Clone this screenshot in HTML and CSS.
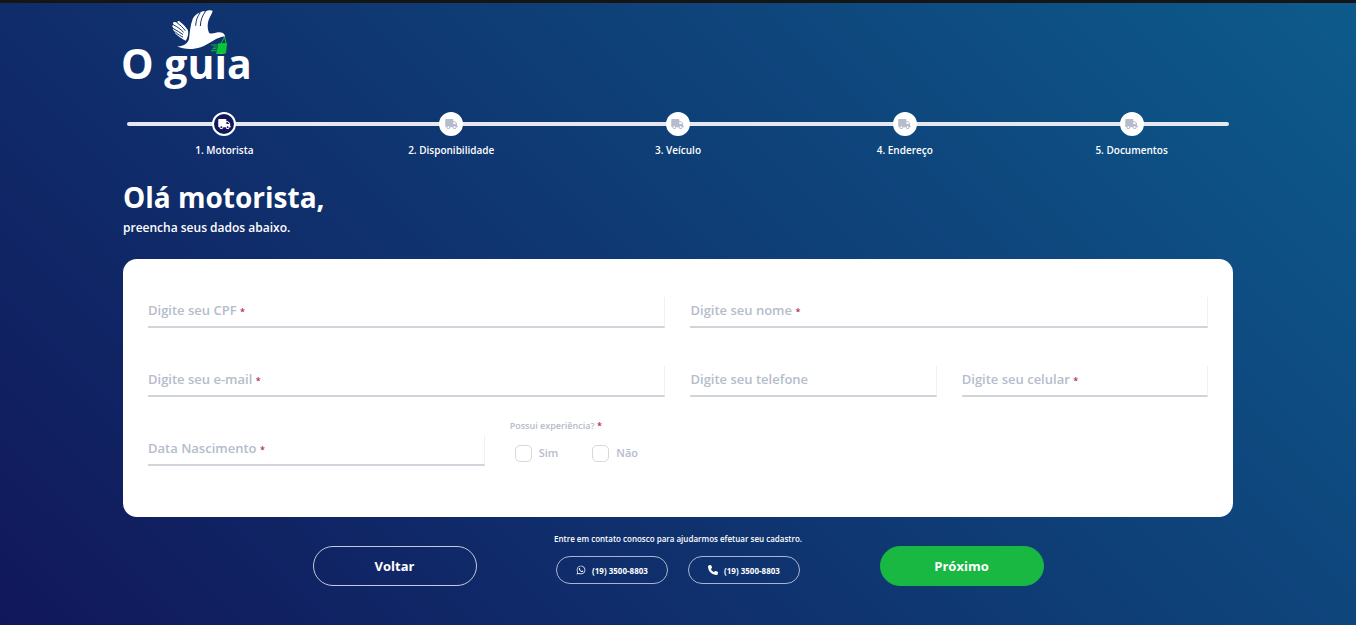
FILE: index.html
```html
<!DOCTYPE html>
<html lang="pt-BR">
<head>
    <meta charset="UTF-8">
    <meta name="viewport" content="width=device-width, initial-scale=1.0">
    <title>O guia - Cadastro de motorista</title>
    <link rel="stylesheet" href="styles.css">
</head>
<body>
    <svg class="sprite" aria-hidden="true">
        <symbol id="truck" viewBox="0 0 640 512">
            <path d="M624 352h-16V243.900c0-12.700-5.100-24.900-14.100-33.900L494 110.100c-9-9-21.200-14.100-33.900-14.100H416V48c0-26.500-21.500-48-48-48H48C21.500 0 0 21.500 0 48v320c0 26.500 21.500 48 48 48h16c0 53 43 96 96 96s96-43 96-96h128c0 53 43 96 96 96s96-43 96-96h48c8.800 0 16-7.200 16-16v-32c0-8.800-7.200-16-16-16zM160 464c-26.500 0-48-21.500-48-48s21.500-48 48-48 48 21.500 48 48-21.500 48-48 48zm320 0c-26.500 0-48-21.500-48-48s21.500-48 48-48 48 21.500 48 48-21.500 48-48 48zm80-208H416V144h44.100l99.900 99.900V256z"/>
        </symbol>
    </svg>

    <div class="container">
        <header>
            <a href="#" class="logo" aria-label="O guia">
                <svg width="140" height="100" viewBox="0 0 140 100">
                    <text class="logo-text" x="-2" y="73">O guia</text>
                    <g transform="translate(37 -1) scale(.3333)">
                        <!-- pomba -->
                        <path fill="#fff" d="M52 124C68 125 82 117 87 103C89 85 91 60 98 42C102 32 112 25 118 24C125 19 131 18 135 20C140 16 155 13 158 19C155 30 147 38 144 52C142 64 143 74 147 83C153 88 160 84 168 83C184 80 193 84 196 95C188 93 183 96 176 99C158 105 144 119 122 127C98 135 70 134 52 124Z"/>
                        <path fill="#fff" d="M84 76C77 65 68 56 58 49C53 46 50 50 55 55L47 52C40 48 36 54 42 60C35 59 36 66 42 71C38 71 39 77 46 81C43 83 47 88 54 92C61 98 70 103 77 107C83 99 86 88 84 76Z"/>
                        <path fill="none" stroke="#12306b" stroke-width="3" stroke-linecap="round" d="M107 61C108 44 113 33 120 24M121 62C122 44 128 30 136 20M75 76C69 68 61 60 53 55M70 81C62 73 53 66 41 60M68 88C60 82 51 77 42 72M68 96C62 93 54 88 47 82"/>
                        <!-- entrega -->
                        <path fill="none" stroke="#08c436" stroke-width="3" d="M194 96L183 116M194 96L198 116M154 120H174M160 126H172M157 131H170M153 137H170"/>
                        <path fill="#08c436" d="M175 115L201 114Q202 115 201 118L198 143Q197 146 193 146L168 147C171 138 173 128 175 115Z"/>
                    </g>
                </svg>
            </a>
        </header>

        <ol class="steps">
            <li class="step active"><span class="step-icon"><svg><use href="#truck"/></svg></span>1. Motorista</li>
            <li class="step"><span class="step-icon"><svg><use href="#truck"/></svg></span>2. Disponibilidade</li>
            <li class="step"><span class="step-icon"><svg><use href="#truck"/></svg></span>3. Veículo</li>
            <li class="step"><span class="step-icon"><svg><use href="#truck"/></svg></span>4. Endereço</li>
            <li class="step"><span class="step-icon"><svg><use href="#truck"/></svg></span>5. Documentos</li>
        </ol>

        <h1>Olá motorista,</h1>
        <p class="subtitle">preencha seus dados abaixo.</p>

        <form>
            <div class="card">
                <div class="field half">
                    <input type="text" id="cpf" required>
                    <label for="cpf">Digite seu CPF <span class="required">*</span></label>
                </div>
                <div class="field half">
                    <input type="text" id="nome" required>
                    <label for="nome">Digite seu nome <span class="required">*</span></label>
                </div>
                <div class="field half">
                    <input type="email" id="email" required>
                    <label for="email">Digite seu e-mail <span class="required">*</span></label>
                </div>
                <div class="field quarter">
                    <input type="tel" id="telefone">
                    <label for="telefone">Digite seu telefone</label>
                </div>
                <div class="field quarter">
                    <input type="tel" id="celular" required>
                    <label for="celular">Digite seu celular <span class="required">*</span></label>
                </div>
                <div class="field third">
                    <input type="text" id="nascimento" required>
                    <label for="nascimento">Data Nascimento <span class="required">*</span></label>
                </div>
                <fieldset class="third">
                    <legend>Possui experiência? <span class="required">*</span></legend>
                    <div class="options">
                        <label><input type="radio" name="experiencia" value="sim">Sim</label>
                        <label><input type="radio" name="experiencia" value="nao">Não</label>
                    </div>
                </fieldset>
            </div>

            <div class="actions">
                <button type="button" class="btn">Voltar</button>
                <div class="contact">
                    <p>Entre em contato conosco para ajudarmos efetuar seu cadastro.</p>
                    <div class="phones">
                        <a href="https://wa.me/551935008803">
                            <svg viewBox="0 0 448 512"><path d="M380.900 97.100C339 55.100 283.200 32 223.900 32c-122.400 0-222 99.600-222 222 0 39.100 10.200 77.300 29.600 111L0 480l117.700-30.900c32.400 17.700 68.900 27 106.100 27h.1c122.300 0 224.100-99.600 224.100-222 0-59.300-25.200-115-67.100-157zm-157 341.600c-33.200 0-65.700-8.900-94-25.700l-6.700-4-69.800 18.300L72 359.200l-4.400-7c-18.500-29.400-28.200-63.300-28.200-98.200 0-101.700 82.800-184.500 184.600-184.500 49.300 0 95.600 19.200 130.400 54.100 34.800 34.900 56.200 81.200 56.100 130.500 0 101.800-84.900 184.600-186.600 184.600zm101.200-138.200c-5.500-2.800-32.800-16.200-37.900-18-5.100-1.900-8.800-2.800-12.500 2.800-3.700 5.600-14.300 18-17.600 21.800-3.200 3.700-6.500 4.200-12 1.400-32.600-16.300-54-29.100-75.500-66-5.700-9.800 5.700-9.100 16.300-30.300 1.800-3.700.9-6.900-.5-9.700-1.400-2.800-12.500-30.100-17.100-41.200-4.500-10.800-9.100-9.300-12.500-9.500-3.200-.2-6.900-.2-10.600-.2-3.700 0-9.700 1.400-14.800 6.900-5.100 5.600-19.400 19-19.400 46.300 0 27.300 19.900 53.700 22.600 57.400 2.800 3.700 39.100 59.700 94.800 83.800 35.200 15.200 49 16.500 66.600 13.900 10.700-1.600 32.800-13.400 37.400-26.400 4.600-13 4.600-24.100 3.200-26.400-1.300-2.500-5-3.900-10.500-6.600z"/></svg>
                            (19) 3500-8803
                        </a>
                        <a href="tel:+551935008803">
                            <svg viewBox="0 0 512 512"><path d="M164.900 24.600c-7.700-18.600-28-28.500-47.400-23.200l-88 24C12.100 30.200 0 46 0 64C0 311.400 200.600 512 448 512c18 0 33.800-12.100 38.600-29.500l24-88c5.300-19.400-4.600-39.700-23.200-47.400l-96-40c-16.300-6.800-35.200-2.100-46.300 11.600L304.700 368C234.300 334.700 177.300 277.700 144 207.300L193.300 167c13.700-11.200 18.400-30 11.600-46.300l-40-96z"/></svg>
                            (19) 3500-8803
                        </a>
                    </div>
                </div>
                <button type="submit" class="btn btn-next">Próximo</button>
            </div>
        </form>
    </div>
</body>
</html>
```

FILE: styles.css
```css
* { box-sizing: border-box; }
body {
    margin: 0; min-height: 100vh;
    font-family: "Open Sans", "Noto Sans", sans-serif;
    color: #fff;
    border-top: 3px solid #151515;
    background: linear-gradient(45deg, #11175b 0%, #0d5b8b 100%);
}
.sprite { display: none; }
.container { max-width: 1134px; margin: 0 auto; padding: 0 12px 36px; }
.logo { display: block; width: 140px; height: 86px; margin-top: 3px; }
.logo svg { display: block; overflow: visible; }
.logo-text { font-size: 41px; font-weight: 700; fill: #fff; }

/* etapas */
.steps {
    display: flex; position: relative;
    list-style: none; padding: 0; margin: 20px -12px 0;
}
.steps::before {
    content: ""; position: absolute; top: 10px; left: 16px; right: 16px;
    height: 4px; border-radius: 2px; background: #e6e8ee;
}
.step {
    flex: 1; position: relative;
    display: flex; flex-direction: column; align-items: center; gap: 6px;
    font-size: 10px; line-height: 16px; font-weight: 600;
}
.step-icon {
    width: 24px; height: 24px; border-radius: 50%;
    border: 2px solid #fff; background: #fff; color: #b5bccb;
    display: flex; align-items: center; justify-content: center;
}
.step-icon svg { width: 13px; height: 10px; fill: currentColor; }
.step.active .step-icon { background: #11175b; color: #fff; }

h1 { margin: 20px 0 0; font-size: 28px; line-height: 38px; font-weight: 700; }
.subtitle { margin: 2px 0 21px; font-size: 12px; line-height: 20px; font-weight: 600; }

/* formulário */
.card {
    display: grid; grid-template-columns: repeat(12, 1fr);
    grid-auto-rows: minmax(69px, auto); column-gap: 25px; align-items: end;
    background: #fff; border-radius: 14px; padding: 0 25px 51px;
}
.half { grid-column: span 6; }
.third { grid-column: span 4; }
.quarter { grid-column: span 3; }
.field { display: grid; }
.field input, .field label { grid-area: 1 / 1; }
.field input {
    width: 100%; height: 31px; padding: 0; font: inherit; font-size: 13px; color: #333;
    background: none; border: 0; border-right: 1px solid #f0f1f3;
    border-bottom: 2px solid #d0d4db; outline: none;
}
.field label {
    pointer-events: none; color: #b5bccb;
    font-size: 13px; line-height: 26px; font-weight: 600;
}
.field input:focus { border-bottom-color: #11175b; }
.field input:focus + label, .field input:valid:required + label { visibility: hidden; }
.required { color: #b02a4a; font-size: 9px; }
fieldset { align-self: start; border: 0; margin: 0; padding: 22px 0 0; color: #b5bccb; min-width: 0; }
legend { float: left; width: 100%; padding: 0; font-size: 9px; line-height: 14px; font-weight: 600; }
.options { clear: both; display: flex; gap: 34px; padding: 11px 0 0 5px; }
.options label { display: flex; align-items: center; gap: 7px; font-size: 11px; line-height: 18px; font-weight: 600; }
.options input {
    appearance: none; width: 17px; height: 17px; margin: 0;
    border: 1px solid #d8d8d8; border-radius: 5px; background: #fff;
}
.options input:checked { background: #18b843; }

/* rodapé */
.actions {
    display: grid; grid-template-columns: repeat(3, 25%); justify-content: center;
    justify-items: center; align-items: start; margin: 14px -12px 0;
}
.btn {
    width: 164px; height: 40px; margin-top: 15px; border-radius: 20px;
    border: 1px solid #c3cadb; background: none; color: #fff;
    font: inherit; font-size: 13px; font-weight: 700; cursor: pointer;
}
.btn-next { background: #18b843; border-color: #18b843; }
.contact p { margin: 0; font-size: 8px; line-height: 16px; font-weight: 600; white-space: nowrap; text-align: center; }
.phones { display: flex; justify-content: center; gap: 20px; margin-top: 9px; }
.phones a {
    width: 112px; height: 28px; border: 1px solid #a9b5ce; border-radius: 14px;
    display: flex; align-items: center; justify-content: center; gap: 6px;
    color: #fff; font-size: 8px; font-weight: 700; text-decoration: none;
}
.phones svg { width: 10px; height: 10px; fill: currentColor; }

@media (max-width: 800px) {
    .half, .third, .quarter { grid-column: 1 / -1; }
    .actions { grid-template-columns: 1fr; row-gap: 15px; }
}
```
